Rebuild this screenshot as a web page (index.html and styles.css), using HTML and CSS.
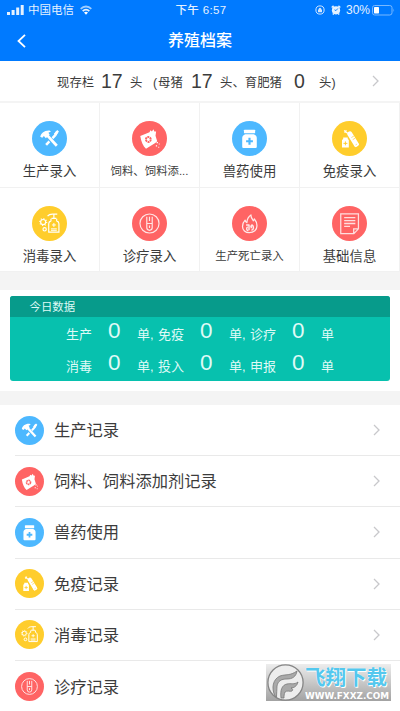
FILE: index.html
```html
<!DOCTYPE html>
<html lang="zh-CN">
<head>
<meta charset="utf-8">
<meta name="viewport" content="width=device-width, initial-scale=1">
<title>养殖档案</title>
<link rel="stylesheet" href="styles.css">
</head>
<body>
<svg class="sprite" aria-hidden="true">
  <symbol id="tools" viewBox="0 0 36 36">
    <circle cx="18" cy="18" r="18" fill="#4db8ff"/>
    <path d="M14.5 24.5 24 14.5M24 14.500 26 10.500" stroke="#fff" stroke-width="2.600" fill="none"/>
    <path d="m22.500 13 3.600-3.800 1.600 1.600-3 4.400z" fill="#fff"/>
    <path d="M15 14.500 25.500 26" stroke="#4db8ff" stroke-width="4.500"/>
    <path d="M14.500 13.500 25.500 25.500" stroke="#fff" stroke-width="2.800"/>
    <path d="M8.500 16.200c.5-3.500 4-6.800 9.500-6.500l1.500 1.200-2.600 1.300 1.300 2-4 3.500-2-2.200-1.600 1.800z" fill="#fff"/>
  </symbol>
  <symbol id="feed" viewBox="0 0 36 36">
    <circle cx="18" cy="18" r="18" fill="#ff6464"/>
    <path d="M8.500 15.500 18 11.500l1-2 1.500 1.200L22 8.500l1 2.200 1.800.2-.6 4.300 1.700 5.500-2 2-9.500 5.800c-3-2.500-5-7-5.900-13z" fill="#fff"/>
    <circle cx="16.800" cy="19" r="2.500" fill="none" stroke="#ff6464" stroke-width="2" stroke-dasharray="2 .6"/>
    <path d="M25.300 21.500h1.400v1.400h-1.400zM27.500 23.200h1v1h-1zM24.500 25h1.300v1.300h-1.300zM27 26.500h1v1h-1z" fill="#fff"/>
  </symbol>
  <symbol id="medicine" viewBox="0 0 36 36">
    <circle cx="18" cy="18" r="18" fill="#4db8ff"/>
    <rect x="12.300" y="9" width="11.500" height="3.600" rx=".6" fill="#fff"/>
    <path d="M13.500 13.600h9c1.800.8 3 2 3 3.800v9.100q0 1.200-1.200 1.200H11.700q-1.200 0-1.200-1.200v-9.100c0-1.800 1.200-3 3-3.800z" fill="#fff"/>
    <path d="M18 17.300v7M14.500 20.800h7" stroke="#4db8ff" stroke-width="2.200"/>
  </symbol>
  <symbol id="vaccine" viewBox="0 0 36 36">
    <circle cx="18" cy="18" r="18" fill="#ffcd2c"/>
    <path d="M12.500 9.800 16 12.500M14.800 9.500l-1.800 2.600" stroke="#fff" stroke-width="1.300"/>
    <path d="m18.300 13.300 6.500 10.500" stroke="#fff" stroke-width="5.200" stroke-linecap="round"/>
    <path d="m24.500 23.500 1.400 2.200" stroke="#fff" stroke-width="4.800"/>
    <path d="m20 17 2.500-1.500M21.300 19.200l2.500-1.500M24.300 24.500l1.300-.7" stroke="#ffcd2c" stroke-width=".7"/>
    <path d="M11.500 17h4.700v1.500l1.100 1v7.800h-7v-7.800l1.200-1z" fill="#fff"/>
    <path d="M13.800 21v4M11.800 23h4" stroke="#ffcd2c" stroke-width="1"/>
  </symbol>
  <symbol id="sanitize" viewBox="0 0 36 36">
    <circle cx="18" cy="18" r="18" fill="#ffcd2c"/>
    <g fill="none" stroke="#fff" stroke-width="1.200">
      <path d="M16 10.500c1.200-1.700 2.800-2.200 5-2.200h5M22.500 8.500v4M20 12.700h5M19.500 13v2.300c-1.500.5-2.300 1.500-2.300 3v8.500h10.500v-8.500c0-1.500-.8-2.500-2.300-3V13"/>
      <path d="M22.500 17.500v4M20.500 19.500h4M19.500 23.500h6M19.500 25h6" stroke-width="1"/>
      <circle cx="11.500" cy="16.500" r="2.600"/>
      <circle cx="11.500" cy="16.500" r="3.600" stroke-dasharray="1 1.800"/>
      <circle cx="13" cy="24" r="1.700"/>
    </g>
  </symbol>
  <symbol id="treat" viewBox="0 0 36 36">
    <circle cx="18" cy="18" r="18" fill="#ff6464"/>
    <g fill="none" stroke="#ffe5e5" stroke-width="1.200">
      <circle cx="18" cy="18" r="9.800"/>
      <path d="M15.200 11v11.200a2.800 2.800 0 0 0 5.600 0V11M15.200 18h5.600M18 11v4.500M18 20v2.500"/>
    </g>
  </symbol>
  <symbol id="fire" viewBox="0 0 36 36">
    <circle cx="18" cy="18" r="18" fill="#ff6464"/>
    <g fill="none" stroke="#ffe9e9" stroke-width="1.300" stroke-linejoin="round">
      <path d="M17.800 27.500c-4 0-7-2.800-7-6.500 0-3 1.200-5 2.700-6.500.2 1.500.8 2.300 1.800 2.500.2-3.200 1.500-6 4.200-7.800-.2 3 1.200 4.200 2.500 6 .7-.4 1-1 1-2 1.500 1.800 2.700 4.200 2.700 7 0 4.300-3.300 7.300-7.900 7.300z"/>
      <path d="M14.500 19.500h3v5.500M16.200 21.500c-1.800 1-1.300 3.500.6 4M20 25c2.500-.5 2.800-4 .5-5.500l-1.500 1.800M19.800 20v3" stroke-width="1.500"/>
    </g>
  </symbol>
  <symbol id="doc" viewBox="0 0 36 36">
    <circle cx="18" cy="18" r="18" fill="#ff6464"/>
    <path d="M9 8.200H27.200v15.300L22.500 28.500H9zM27 23.500h-4.700V28M12.500 12h11.500M12.500 15h11.500M12.500 18h11.500M12.500 21h6" fill="none" stroke="#ffdede" stroke-width="1.300"/>
  </symbol>
  <symbol id="chevron" viewBox="0 0 8 12">
    <path d="m1 1 5 5-5 5" fill="none" stroke="#c8c8cb" stroke-width="1.300"/>
  </symbol>
</svg>

<header class="header">
  <div class="status">
    <div class="status-side">
      <svg class="signal" viewBox="0 0 17 10"><path d="M0 7h3v3H0zM4.600 5h3v5h-3zM9.200 2.500h3V10h-3zM13.700 0h3v10h-3z" fill="#e4f1ff"/></svg>
      <span>中国电信</span>
      <svg class="wifi" viewBox="0 0 12 10"><g fill="none" stroke="#e4f1ff" stroke-width="1.800"><path d="M.7 3.800C3.800.7 8.200.7 11.300 3.800" opacity=".7"/><path d="M2.700 6.100c2-2 4.600-2 6.600 0"/></g><path d="m6 9.800 2-2.200c-1.200-1-2.800-1-4 0z" fill="#fff"/></svg>
    </div>
    <div class="clock">下午 6:57</div>
    <div class="status-side right">
      <svg class="lock" viewBox="0 0 10 10"><circle cx="5" cy="5" r="4.100" fill="none" stroke="#cfe5ff" stroke-width="1"/><path d="M3 4.600h4v2.700H3zM3.800 4.600V3.500q1.200-1.400 2.400 0v1.100" fill="#cfe5ff"/></svg>
      <svg class="alarm" viewBox="0 0 10 10"><circle cx="5" cy="5.300" r="4.100" fill="#e4f1ff"/><path d="M.7 2.500 2.600.9M9.300 2.500 7.400.9M1.800 9.500l1-1M8.200 9.500l-1-1" stroke="#e4f1ff" stroke-width="1.500"/><path d="M6.800 3.500 5 5.600 3.500 4.800" fill="none" stroke="#007aff" stroke-width=".9"/></svg>
      <span class="percent">30%</span>
      <svg class="battery" viewBox="0 0 23 11"><rect x=".5" y=".5" width="19.500" height="9.500" rx="2.200" fill="none" stroke="#79b8ff"/><rect x="2" y="2" width="5" height="6.500" rx=".7" fill="#fff"/><path d="M21.500 3.500q1.300 1.800 0 3.500z" fill="#79b8ff"/></svg>
    </div>
  </div>
  <div class="titlebar">
    <svg class="back" viewBox="0 0 9 14"><path d="M8 .8 1.500 7 8 13.200" fill="none" stroke="#fff" stroke-width="1.800"/></svg>
    <h1>养殖档案</h1>
  </div>
</header>

<section class="stock">
  <span class="s-label">现存栏</span><span class="num s-n1">17</span><span class="s-u1">头</span><span class="s-paren">(</span><span class="s-sow">母猪</span><span class="num s-n2">17</span><span class="s-pig">头、育肥猪</span><span class="num s-n3">0</span><span class="s-end">头)</span>
  <svg class="chevron"><use href="#chevron"/></svg>
</section>

<nav class="grid">
  <div class="cell"><svg><use href="#tools"/></svg><span>生产录入</span></div>
  <div class="cell small"><svg><use href="#feed"/></svg><span>饲料、饲料添...</span></div>
  <div class="cell"><svg><use href="#medicine"/></svg><span>兽药使用</span></div>
  <div class="cell"><svg><use href="#vaccine"/></svg><span>免疫录入</span></div>
  <div class="cell"><svg><use href="#sanitize"/></svg><span>消毒录入</span></div>
  <div class="cell"><svg><use href="#treat"/></svg><span>诊疗录入</span></div>
  <div class="cell small"><svg><use href="#fire"/></svg><span>生产死亡录入</span></div>
  <div class="cell"><svg><use href="#doc"/></svg><span>基础信息</span></div>
</nav>

<section class="today-wrap">
  <div class="today">
    <h2>今日数据</h2>
    <div class="figures">
      <span>生产</span><b>0</b><span>单,</span><span>免疫</span><b>0</b><span>单,</span><span>诊疗</span><b>0</b><span>单</span>
      <span>消毒</span><b>0</b><span>单,</span><span>投入</span><b>0</b><span>单,</span><span>申报</span><b>0</b><span>单</span>
    </div>
  </div>
</section>

<main class="list">
  <div class="row"><svg class="icon"><use href="#tools"/></svg><span>生产记录</span><svg class="chevron"><use href="#chevron"/></svg></div>
  <div class="row"><svg class="icon"><use href="#feed"/></svg><span>饲料、饲料添加剂记录</span><svg class="chevron"><use href="#chevron"/></svg></div>
  <div class="row"><svg class="icon"><use href="#medicine"/></svg><span>兽药使用</span><svg class="chevron"><use href="#chevron"/></svg></div>
  <div class="row"><svg class="icon"><use href="#vaccine"/></svg><span>免疫记录</span><svg class="chevron"><use href="#chevron"/></svg></div>
  <div class="row"><svg class="icon"><use href="#sanitize"/></svg><span>消毒记录</span><svg class="chevron"><use href="#chevron"/></svg></div>
  <div class="row"><svg class="icon"><use href="#treat"/></svg><span>诊疗记录</span></div>
</main>

<aside class="watermark">
  <svg class="mark" viewBox="0 0 37 37">
    <circle cx="18.500" cy="18.500" r="17.600" fill="#ededed" stroke="#858585" stroke-width="1.300"/>
    <path d="M8 32C4 24 6 15 13 12c6-2 10 0 17-5-1 6-5 8-10 8-6 0-9 2-10 7-.5 4 0 7-.500 11z" fill="#a9a9a9" stroke="#777" stroke-width=".8"/>
    <path d="M14 34c-1-8 1-13 6-14 4-1 7 1 11-2-1 4-4 6-7 6 2 1 2 2 1 3-2 1-5-1-7 1-1 2-1 4-1 6z" fill="#a9a9a9" stroke="#777" stroke-width=".8"/>
  </svg>
  <div class="mark-text"><strong>飞翔下载</strong><svg class="site" viewBox="0 0 86 9"><text x="0" y="7.500" textLength="84" lengthAdjust="spacingAndGlyphs">WWW.FXXZ.COM</text></svg></div>
</aside>
</body>
</html>
```

FILE: styles.css
```css
* { box-sizing: border-box; }
body {
  margin: 0;
  height: 711px;
  overflow: hidden;
  position: relative;
  background: #fff;
  color: #3c3c3c;
  font-family: "Liberation Sans", "Noto Sans CJK SC", sans-serif;
}
svg { display: block; flex: none; }
.sprite { position: absolute; width: 0; height: 0; }

.header { height: 61px; background: #007aff; color: #fff; }
.status {
  height: 20px;
  padding: 0 5px 0 7px;
  display: grid;
  grid-template-columns: 1fr auto 1fr;
  align-items: center;
  font-size: 11.5px;
  line-height: 20px;
  color: #e4f1ff;
}
.status-side { display: flex; align-items: center; }
.right { justify-content: flex-end; }
.signal { width: 17px; height: 10px; margin-right: 4px; }
.wifi { width: 12px; height: 10px; margin-left: 6px; }
.clock { letter-spacing: .35px; font-weight: 500; }
.lock { width: 10px; height: 10px; margin-right: 6px; }
.alarm { width: 10px; height: 10px; margin-right: 5px; }
.percent { margin-right: 2px; font-size: 12px; }
.battery { width: 23px; height: 11px; }
.titlebar {
  height: 41px;
  padding: 0 17px;
  display: grid;
  grid-template-columns: 9px 1fr 9px;
  align-items: center;
}
.back { width: 9px; height: 14px; }
h1 { margin: 0; padding-top: 1px; text-align: center; font-size: 16px; line-height: 24px; font-weight: 500; }

.stock {
  height: 42px;
  padding: 0 20px 0 57px;
  display: flex;
  align-items: center;
  border-bottom: 2px solid #f4f4f4;
  font-size: 12.4px;
  line-height: 20px;
  white-space: nowrap;
}
.stock span { flex: none; padding-top: 3px; }
.stock .num { font-size: 19.500px; padding-top: 0; }
.stock .chevron { margin-left: auto; }
.s-label { width: 44px; }
.s-n1 { width: 29px; }
.s-u1 { width: 23px; }
.s-paren { width: 5px; }
.s-sow { width: 33px; }
.s-n2 { width: 29px; }
.s-pig { width: 74px; }
.s-n3 { width: 25px; }
.chevron { width: 8px; height: 12px; }

.grid {
  display: grid;
  grid-template-columns: repeat(4, 100px);
  grid-template-rows: 85px 84px;
}
.cell {
  border-right: 1px solid #f1f1f1;
  border-bottom: 1px solid #f1f1f1;
  display: flex;
  flex-direction: column;
  align-items: center;
  padding-top: 18px;
  font-size: 13.4px;
  line-height: 20px;
}
.cell svg { width: 35px; height: 35px; margin-bottom: 6px; }
.cell:nth-child(n+5) { padding-top: 17.500px; }
.cell.small { font-size: 11.4px; }
.small svg { margin-bottom: 5px; }

.today-wrap {
  height: 133px;
  padding: 6px 10px 0;
  border-top: 18px solid #f4f4f4;
  border-bottom: 14px solid #f4f4f4;
}
.today {
  height: 85px;
  border-radius: 3px;
  overflow: hidden;
  background: #07c1ae;
  color: #dffaf6;
}
h2 {
  margin: 0;
  height: 21px;
  padding-left: 19.500px;
  background: #079b8b;
  font-size: 11.4px;
  line-height: 23px;
  font-weight: 400;
}
.figures {
  display: grid;
  grid-template-columns: repeat(3, 42px 29px 21px);
  grid-template-rows: 32px 32px;
  align-items: center;
  padding-left: 56px;
  font-size: 13px;
  line-height: 20px;
}
.figures span { padding-top: 4px; }
.figures b { font-size: 22.500px; font-weight: 400; line-height: 28px; margin-top: -4px; }

.row {
  height: 51.200px;
  margin-left: 15px;
  padding-right: 19px;
  display: flex;
  align-items: center;
  border-bottom: 1.500px solid #e9e9e9;
  font-size: 16.300px;
}
.row:last-child { border: 0; }
.row span { margin-right: auto; padding-bottom: 2px; }
.icon { width: 29px; height: 29px; margin-right: 10px; }

.watermark {
  position: absolute;
  left: 266px;
  top: 664px;
  width: 125px;
  height: 37px;
  display: flex;
  background: linear-gradient(#ededed, #b9b9b9 70%, #a2a2a2);
}
.mark { width: 37px; height: 37px; margin-left: 1px; }
.mark-text { padding-left: 1px; }
.mark-text strong {
  display: block;
  height: 27px;
  font-size: 20.500px;
  line-height: 28px;
  color: #54c8ee;
  text-shadow: 0 0 1px #fff, 1px 1px 0 #fff;
  white-space: nowrap;
}
.site {
  width: 86px;
  height: 9px;
  fill: #fff;
  font: bold 8px "DejaVu Sans", sans-serif;
}
```
